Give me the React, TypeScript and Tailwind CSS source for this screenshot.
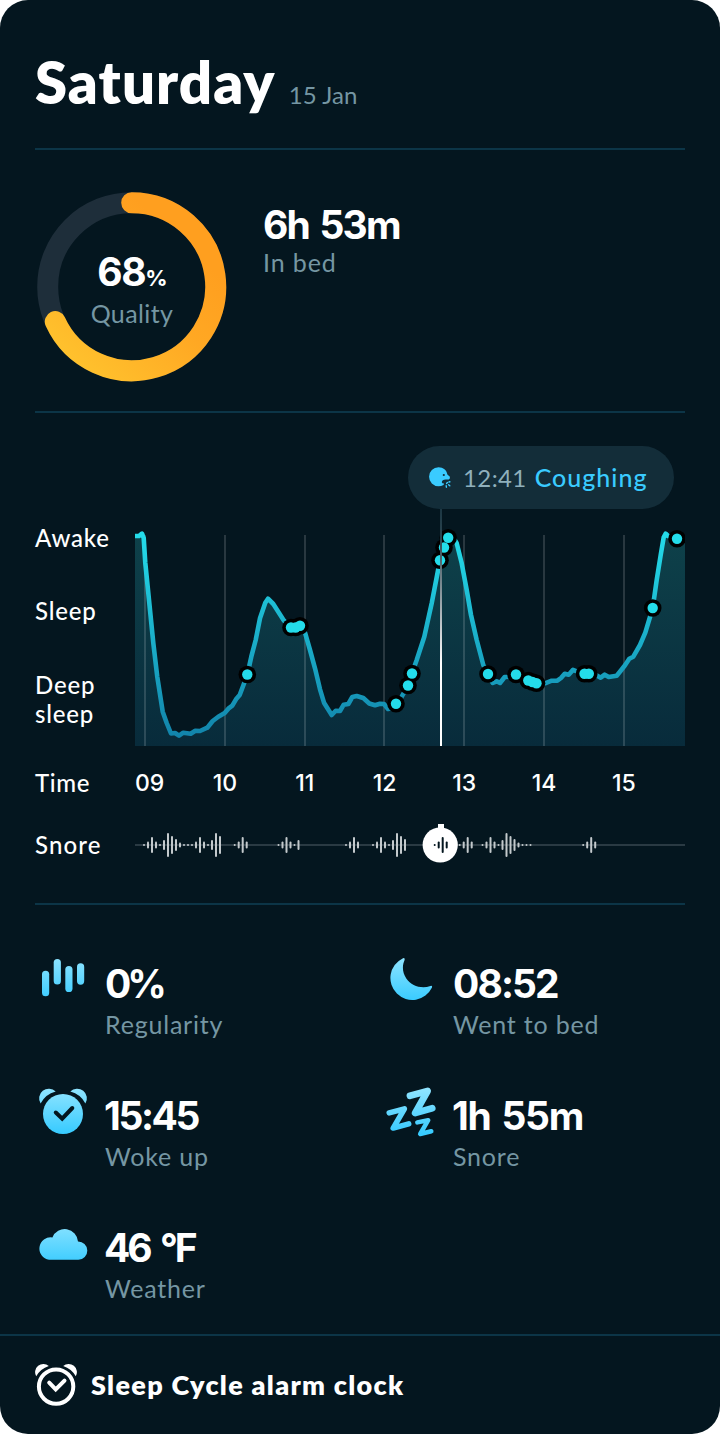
import type { ReactNode } from 'react';

const HOURS = ['09', '10', '11', '12', '13', '14', '15'];
const GRID_X = [145, 225, 305, 384, 464, 544, 624];

// Sleep depth samples, in chart space (x 135-685, y 509-746)
const CURVE: [number, number][] = [
  [135, 536], [139, 536], [142, 533.6], [143.7, 538], [145.3, 563], [149.3, 603], [153.3, 643], [157.3, 677],
  [162.7, 711.7], [166.7, 723], [171, 733.5], [175, 733], [179, 735.7], [183.3, 732.7], [190.7, 733.7],
  [195.3, 730.7], [200, 731], [207.3, 727.7], [212.7, 721], [218.3, 716.7], [224.7, 713], [228.3, 708.7],
  [232.3, 705.7], [236, 699.3], [239.7, 695], [247.3, 674.7], [251.3, 656.7], [255.7, 640], [260, 618.3],
  [265.3, 602.7], [268, 598.7], [273.3, 604], [284, 620.7], [290.7, 627.3], [295.3, 627.3], [300, 625.3],
  [305, 632.7], [310, 650], [315, 668.3], [320, 689.3], [324, 702.7], [331.7, 715], [335.7, 710.7], [340, 711],
  [343.7, 704.7], [348.3, 704], [352.3, 697], [356.7, 696], [363.3, 698], [369.3, 703.5], [375, 705.3],
  [380, 703.7], [384, 704], [388, 709], [391.7, 708], [396, 703.7], [401.7, 696.7], [408, 685.7], [412, 673.3],
  [416.7, 660], [424.3, 636.7], [431.7, 603.3], [440, 560.3], [444, 547.3], [448.3, 537.3], [452.3, 536],
  [456.7, 543.3], [461.7, 563.3], [466.7, 590], [471, 615], [476.7, 640], [483.3, 665], [488, 674],
  [492.7, 683], [496.7, 681.3], [500, 683], [504.7, 677], [510, 676.7], [516, 674.7], [528.3, 680.7],
  [536.7, 683.3], [545, 683.3], [551.7, 680.7], [557.3, 680.7], [561, 678], [564.7, 673.7], [568.7, 674.7],
  [573, 669.9], [576.7, 671.3], [584.3, 673.7], [589, 673.7], [596, 675], [600.7, 677.7], [604.7, 674.7],
  [608.7, 677], [616.7, 675.7], [620.7, 670.7], [625, 665.3], [629.3, 658.7], [633.3, 656.7], [640, 645],
  [645.3, 632.7], [652.7, 608], [656.7, 580], [660.7, 555], [663.7, 537.3], [665.7, 533.7], [668, 536],
  [677, 538.7], [685, 538],
];

const EVENTS: [number, number][] = [
  [247.3, 674.5], [291, 627.5], [295.5, 627.5], [300, 625.7], [396, 703.7], [408, 685.5], [412, 673.5],
  [440, 560.3], [444, 547.5], [448.2, 537.8], [488, 674], [516, 674.5], [528.3, 680.5], [532.5, 682],
  [536.5, 683.3], [584.5, 673.8], [588.8, 673.8], [652.7, 608], [677, 538.7],
];

const SNORE_SHAPE = [2, 7, 16, 7, 2, 10, 24, 18, 12, 5, 2, 2];
const SNORE_BURSTS = [
  { x: 144, bars: 12 },
  { x: 192, bars: 8 },
  { x: 234.7, bars: 4 },
  { x: 278.5, bars: 6 },
  { x: 346, bars: 4 },
  { x: 373, bars: 9 },
  { x: 459.7, bars: 4 },
  { x: 482.5, bars: 12 },
  { x: 530.5, bars: 1 },
  { x: 583.2, bars: 4 },
];

const curvePoints = CURVE.map((p) => p.join(',')).join(' ');

function Divider() {
  return <div className="h-[2px] shrink-0 bg-[#0c3547]" />;
}

function QualityRing() {
  return (
    <div className="grid h-[190px] w-[190px] place-items-center">
      <svg viewBox="0 0 190 190" className="col-start-1 row-start-1 h-[190px] w-[190px]">
        <defs>
          <linearGradient id="ring" gradientUnits="userSpaceOnUse" x1="15" y1="150" x2="125" y2="30">
            <stop offset="0" stopColor="#ffc12d" />
            <stop offset="0.6" stopColor="#ffa823" />
            <stop offset="1" stopColor="#ff9f1f" />
          </linearGradient>
        </defs>
        <circle cx="94.7" cy="94.7" r="84" fill="none" stroke="#1e2e3a" strokeWidth="21" />
        <path
          d="M94.7 10.7A84 84 0 1 1 18.3 129.6"
          fill="none"
          stroke="url(#ring)"
          strokeWidth="21"
          strokeLinecap="round"
        />
      </svg>
      <div className="col-start-1 row-start-1 flex flex-col items-center pt-[6px]">
        <div className="flex items-baseline pt-[4px] font-['Inter'] font-bold leading-[40px] text-white">
          <span className="text-[39px] tracking-[-1.4px]">68</span>
          <span className="text-[22px] tracking-[-1px]">%</span>
        </div>
        <div className="-mt-[5px] text-[25px] leading-[40px] tracking-[0.4px] text-[#7596a3]">Quality</div>
      </div>
    </div>
  );
}

function CoughIcon() {
  return (
    <svg viewBox="0 0 22 22" className="h-[22px] w-[22px]">
      <path
        d="M9.5 0.3C14.3 0.3 17.7 3.4 18.4 7.4L20.9 9.8Q21.3 12 19.8 12.4L16.8 12.5Q12.8 12.8 12.8 15.2Q13 16.4 15 16.6L14.6 18Q12.2 19.2 9.5 19.2A9.4 9.4 0 0 1 9.5 0.3Z"
        fill="#3acbff"
      />
      <circle cx="14.8" cy="8" r="1.1" fill="#132d39" />
      <path
        d="M17.6 16.4L18.4 15.6M20 15L20.9 14.8M17.2 18.8L17.4 20.2M19.6 17.8L20.8 18.8"
        stroke="#3acbff"
        strokeWidth="1.4"
        strokeLinecap="round"
      />
    </svg>
  );
}

function SleepChart() {
  return (
    <svg viewBox="135 509 550 237" className="h-[237px] w-[550px]">
      <defs>
        <linearGradient id="curve" gradientUnits="userSpaceOnUse" x1="0" y1="535" x2="0" y2="746">
          <stop offset="0" stopColor="#24dcea" />
          <stop offset="1" stopColor="#1180a8" />
        </linearGradient>
        <linearGradient id="area" gradientUnits="userSpaceOnUse" x1="0" y1="535" x2="0" y2="746">
          <stop offset="0" stopColor="#0e414a" />
          <stop offset="1" stopColor="#082b3b" />
        </linearGradient>
        <linearGradient id="cursor" gradientUnits="userSpaceOnUse" x1="0" y1="509" x2="0" y2="746">
          <stop offset="0" stopColor="#1c3743" />
          <stop offset="0.12" stopColor="#2b444f" />
          <stop offset="0.65" stopColor="#ffffff" />
          <stop offset="1" stopColor="#ffffff" />
        </linearGradient>
      </defs>
      <polygon points={`135,746 ${curvePoints} 685,746`} fill="url(#area)" />
      {GRID_X.map((x) => (
        <rect key={x} x={x - 1} y="535" width="2" height="211" fill="#ffffff" opacity="0.15" />
      ))}
      <polyline points={curvePoints} fill="none" stroke="url(#curve)" strokeWidth="4.6" strokeLinejoin="round" />
      {EVENTS.map(([x, y]) => (
        <circle key={x} cx={x} cy={y} r="8.8" fill="#000000" />
      ))}
      {EVENTS.map(([x, y]) => (
        <circle key={x} cx={x} cy={y} r="5.2" fill="#24dcea" />
      ))}
      <rect x="440" y="509" width="2" height="237" fill="url(#cursor)" />
    </svg>
  );
}

function SnoreBars({ x, bars, color }: { x: number; bars: number; color: string }) {
  return (
    <>
      {SNORE_SHAPE.slice(0, bars).map((h, i) => (
        <rect key={i} x={x + i * 4 - 1} y={845 - h / 2} width="2" height={h} rx="1" fill={color} />
      ))}
    </>
  );
}

function SnoreTrack() {
  return (
    <svg viewBox="135 824 550 40" className="h-[40px] w-[550px]">
      <rect x="135" y="844" width="550" height="2" fill="#2a3a43" />
      {SNORE_BURSTS.map((b) => (
        <SnoreBars key={b.x} x={b.x} bars={b.bars} color="#c3c9cc" />
      ))}
      <rect x="438" y="824" width="6" height="8" fill="#ffffff" />
      <circle cx="440.2" cy="845" r="17.6" fill="#ffffff" />
      <SnoreBars x={434.7} bars={4} color="#04161f" />
    </svg>
  );
}

function StatIcon({ id, children }: { id: string; children: ReactNode }) {
  return (
    <svg viewBox="0 0 56 56" className="h-[56px] w-[70px] shrink-0" preserveAspectRatio="xMinYMin">
      <defs>
        <linearGradient id={id} gradientUnits="userSpaceOnUse" x1="0" y1="6" x2="0" y2="50">
          <stop offset="0" stopColor="#8fe4ff" />
          <stop offset="1" stopColor="#38cbff" />
        </linearGradient>
      </defs>
      {children}
    </svg>
  );
}

function RegularityIcon() {
  return (
    <StatIcon id="regularity">
      <g fill="url(#regularity)">
        <rect x="7" y="19.7" width="7.2" height="25.6" rx="3.6" />
        <rect x="18.7" y="8" width="7.2" height="25.6" rx="3.6" />
        <rect x="30.3" y="15" width="7.2" height="26" rx="3.6" />
        <rect x="42" y="12.3" width="7.2" height="21.4" rx="3.6" />
      </g>
    </StatIcon>
  );
}

function MoonIcon() {
  return (
    <StatIcon id="moon">
      <path
        d="M19.6 7.4A21.9 21.9 0 1 0 49 36.6Q49.6 34.4 47.4 35C38 38.2 28.5 34.6 23.3 27.4C19.4 21.8 18.9 15 21.6 9Q22 6.4 19.6 7.4Z"
        fill="url(#moon)"
      />
    </StatIcon>
  );
}

function AlarmIcon() {
  return (
    <StatIcon id="alarm">
      <g fill="url(#alarm)">
        <circle cx="28" cy="31" r="20" />
        <path d="M5.6 20.6A9.7 9.7 0 0 1 20.7 8.6A23.6 23.6 0 0 0 5.6 20.6Z" />
        <path d="M50.4 20.6A9.7 9.7 0 0 0 35.3 8.6A23.6 23.6 0 0 1 50.4 20.6Z" />
      </g>
      <path
        d="M20.8 29.5L27.2 35.6L37.3 25"
        fill="none"
        stroke="#04161f"
        strokeWidth="4"
        strokeLinecap="round"
      />
    </StatIcon>
  );
}

function SnoreIcon() {
  return (
    <StatIcon id="snore">
      <g fill="none" stroke="url(#snore)" strokeLinecap="round" strokeLinejoin="round">
        <path d="M27 12.8L44.6 8L32.2 30L49.2 25.2" strokeWidth="6.8" />
        <path d="M6.2 29.9L21.4 25.8L10.2 45.1L25.7 40.8" strokeWidth="5.5" />
        <path d="M34.3 39.4L45.2 37.2L37.2 51L48.3 48.2" strokeWidth="4.5" />
      </g>
    </StatIcon>
  );
}

function CloudIcon() {
  return (
    <StatIcon id="cloud">
      <path
        d="M14 44.8A11.2 11.2 0 1 1 17.4 22.4A13.3 13.3 0 0 1 43 26.6A9.1 9.1 0 1 1 43.4 44.8Z"
        fill="url(#cloud)"
      />
    </StatIcon>
  );
}

interface StatProps {
  icon: ReactNode;
  value: string;
  label: string;
  valueClass: string;
}

function Stat({ icon, value, label, valueClass }: StatProps) {
  return (
    <div className="flex h-[132px]">
      {icon}
      <div className="pt-[13px]">
        <div className={`font-['Inter'] text-[39px] font-bold leading-[40px] text-white ${valueClass}`}>{value}</div>
        <div className="pt-[4px] text-[25px] leading-[32px] tracking-[0.8px] text-[#7596a3]">{label}</div>
      </div>
    </div>
  );
}

export default function App() {
  return (
    <div className="h-[1434px] w-[720px] bg-white">
      <main className="flex h-full flex-col overflow-hidden rounded-[28px] bg-[#04161f] font-['Lato',sans-serif]">
        <div className="px-[35px]">
          <header className="flex h-[148px] items-baseline gap-[13px] pt-[47px]">
            <h1 className="text-[58px] font-extrabold leading-[70px] tracking-[1.1px] text-white">Saturday</h1>
            <span className="text-[24px] tracking-[0.1px] text-[#7596a3]">15 Jan</span>
          </header>
          <Divider />

          <section className="flex h-[261px] gap-[36px] pl-[2px] pt-[42px]">
            <QualityRing />
            <div className="pt-[13px]">
              <div className="font-['Inter'] text-[39px] font-bold leading-[40px] tracking-[-1.8px] text-white [word-spacing:3px]">
                6h 53m
              </div>
              <div className="-mt-[3px] text-[25px] leading-[40px] tracking-[0.9px] text-[#7596a3]">In bed</div>
            </div>
          </section>
          <Divider />

          <section className="flex h-[490px] flex-col pt-[33px] text-[24px] text-white">
            <div className="ml-[373px] flex h-[63px] w-[266px] items-center rounded-full bg-[#132d39] pl-[21px]">
              <CoughIcon />
              <span className="ml-[12px] tracking-[0.4px] text-[#8fb0bc]">12:41</span>
              <span className="ml-[8px] text-[25px] font-medium tracking-[1px] text-[#3acbff]">Coughing</span>
            </div>
            <div className="flex">
              <div className="flex w-[100px] flex-col pt-[14px] font-medium leading-[29px] tracking-[0.8px]">
                <div className="h-[73px]">Awake</div>
                <div className="h-[74px]">Sleep</div>
                <div className="w-[70px]">Deep sleep</div>
              </div>
              <SleepChart />
            </div>
            <div className="flex pt-[22px] font-medium leading-[30px]">
              <div className="w-[100px] tracking-[0.6px]">Time</div>
              {HOURS.map((h, i) => (
                <div
                  key={h}
                  className={`font-['Inter'] text-[23px] ${i === 0 ? 'w-[50px]' : 'w-[79.8px] text-center'}`}
                >
                  {h}
                </div>
              ))}
            </div>
            <div className="flex pt-[26px]">
              <div className="w-[100px] font-medium leading-[42px] tracking-[1.1px]">Snore</div>
              <SnoreTrack />
            </div>
          </section>
          <Divider />

          <section className="grid h-[429px] grid-cols-[348px_1fr] content-start pt-[46px]">
            <Stat icon={<RegularityIcon />} value="0%" label="Regularity" valueClass="tracking-[-4px]" />
            <Stat icon={<MoonIcon />} value="08:52" label="Went to bed" valueClass="tracking-[-1.9px]" />
            <Stat icon={<AlarmIcon />} value="15:45" label="Woke up" valueClass="-ml-px tracking-[-2.4px]" />
            <Stat icon={<SnoreIcon />} value="1h 55m" label="Snore" valueClass="-ml-px tracking-[-1.3px] [word-spacing:3px]" />
            <Stat icon={<CloudIcon />} value="46 °F" label="Weather" valueClass="-ml-px tracking-[-3px] [word-spacing:4px]" />
          </section>
        </div>
        <Divider />

        <footer className="flex flex-1 items-center gap-[14px] px-[35px]">
          <svg viewBox="0 0 42 44" className="h-[44px] w-[42px]">
            <circle cx="21.1" cy="23.6" r="17.2" fill="none" stroke="#ffffff" strokeWidth="4" />
            <path d="M1.2 13.3A8.25 8.25 0 0 1 13.8 3A22.5 22.5 0 0 0 1.2 13.3Z" fill="#ffffff" />
            <path d="M40.8 13.3A8.25 8.25 0 0 0 28.2 3A22.5 22.5 0 0 1 40.8 13.3Z" fill="#ffffff" />
            <path
              d="M14.2 19.6L20.7 26.4L29.5 17.6"
              fill="none"
              stroke="#ffffff"
              strokeWidth="4"
              strokeLinecap="round"
            />
          </svg>
          <span className="text-[27px] font-extrabold tracking-[1.3px] text-white">Sleep Cycle alarm clock</span>
        </footer>
      </main>
    </div>
  );
}
